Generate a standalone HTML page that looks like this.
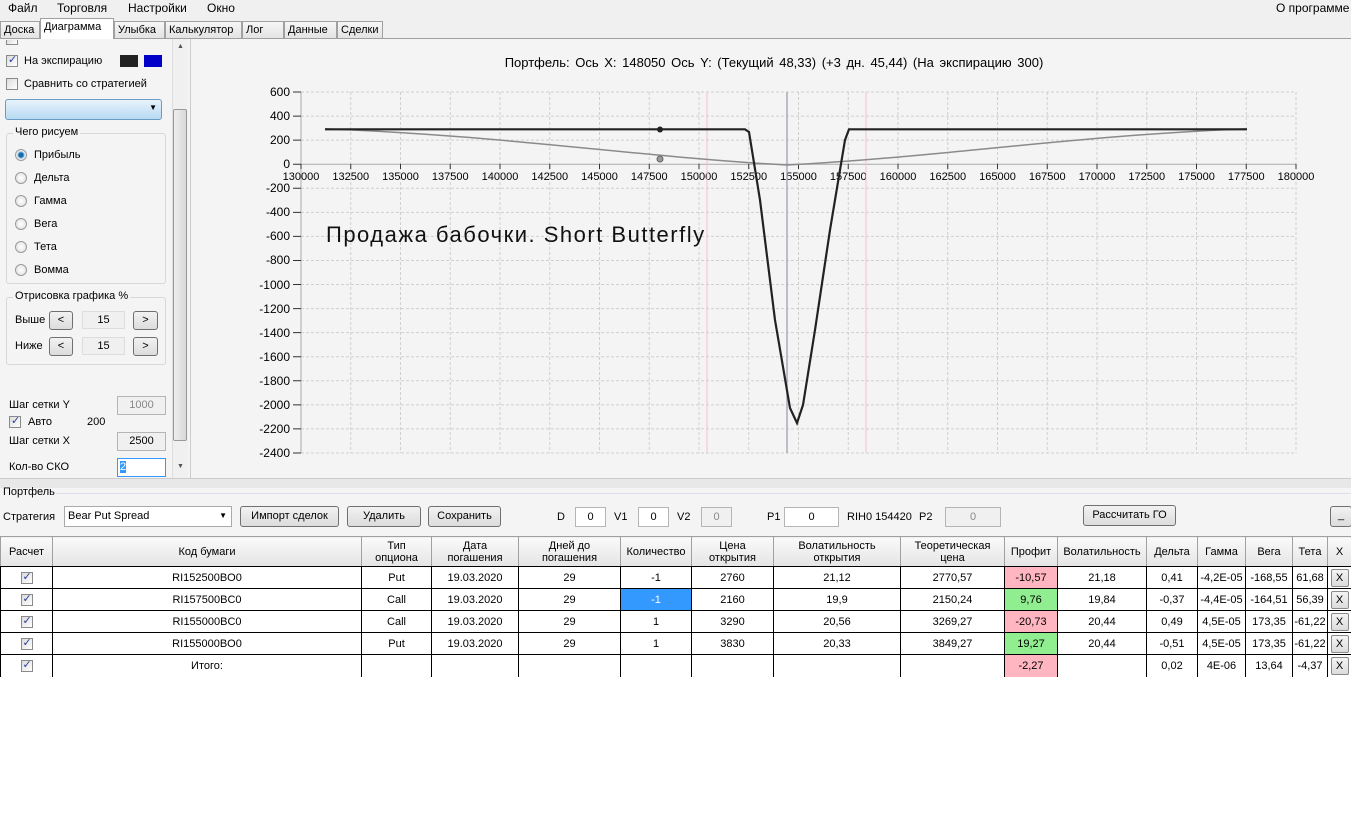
<!DOCTYPE html>
<html><head><meta charset="utf-8">
<style>
*{box-sizing:border-box;margin:0;padding:0}
body{width:1351px;height:816px;background:#fff;font-family:"Liberation Sans","DejaVu Sans",sans-serif;font-size:11px;color:#000;position:relative;overflow:hidden}
.a{position:absolute}
.menu{left:0;top:0;width:1351px;height:18px;background:#f0f0f0;font-size:12px}
.menu span{position:absolute;top:1px}
.tab{position:absolute;top:21px;height:18px;border:1px solid #a0a0a0;border-bottom:none;background:linear-gradient(#f6f6f6,#e2e2e2);font-size:11px;padding:2px 3px 0 3px;white-space:nowrap}
.main{left:0;top:38px;width:1351px;height:440px;background:#f4f4f4;border-top:1px solid #a0a0a0}
.chk{position:absolute;width:12px;height:12px;border:1px solid #8a8a8a;background:linear-gradient(135deg,#dcdcdc,#fff)}
.chk.on::after{content:"✓";position:absolute;left:1px;top:-3px;font-size:11px;color:#2a3f9a;font-weight:bold}
.rad{position:absolute;width:12px;height:12px;border-radius:50%;border:1px solid #9a9a9a;background:radial-gradient(#fff,#ddd)}
.rad.on{background:radial-gradient(#1a6aa8 30%,#8ec6ec 45%,#eee 60%)}
.grp{position:absolute;border:1px solid #d8d8d8;border-radius:3px}
.grp .t{position:absolute;top:-8px;left:6px;background:#f4f4f4;padding:0 2px}
.btn{position:absolute;border:1px solid #707070;border-radius:3px;background:linear-gradient(#f2f2f2,#dcdcdc);text-align:center;font-size:11px;line-height:17px}
.inp{position:absolute;border:1px solid #b5b5b5;background:#fff;text-align:center;line-height:17px}
.dis{background:#f0f0f0;color:#888}
table{position:absolute;left:0;top:536px;border-collapse:collapse;table-layout:fixed;width:1351px;font-size:11px}
td,th{border:1px solid #000;text-align:center;height:22px;padding:0;overflow:hidden;white-space:nowrap}
th{background:linear-gradient(#fafafa,#e4e4e4);font-weight:normal;height:30px;border-color:#a0a0a0;line-height:12px;border-bottom:1px solid #000}
.r{background:#ffb6c1}.g{background:#90ee90}
.x{display:inline-block;width:18px;height:18px;border:1px solid #8a8a8a;border-radius:2px;background:linear-gradient(#f4f4f4,#dcdcdc);line-height:16px}
td .chk{position:relative;display:inline-block;vertical-align:middle}
</style></head><body>
<div class="a menu"><span style="left:8px">Файл</span><span style="left:57px">Торговля</span><span style="left:128px">Настройки</span><span style="left:207px">Окно</span><span style="left:1276px">О программе</span></div>
<div class="a" style="left:0;top:18px;width:1351px;height:21px;background:#f0f0f0"></div>
<div class="tab" style="left:0;width:40px">Доска</div>
<div class="tab" style="left:40px;top:18px;height:21px;width:74px;background:#fff;z-index:2">Диаграмма</div>
<div class="tab" style="left:114px;width:51px">Улыбка</div>
<div class="tab" style="left:165px;width:77px">Калькулятор</div>
<div class="tab" style="left:242px;width:42px">Лог</div>
<div class="tab" style="left:284px;width:53px">Данные</div>
<div class="tab" style="left:337px;width:46px">Сделки</div>

<div class="a main">
 <div class="chk" style="left:6px;top:1px;height:5px;border-top:none"></div>
 <div class="chk on" style="left:6px;top:16px"></div><div class="a" style="left:24px;top:16px">На экспирацию</div>
 <div class="a" style="left:120px;top:16px;width:18px;height:12px;background:#222"></div>
 <div class="a" style="left:144px;top:16px;width:18px;height:12px;background:#0000c8"></div>
 <div class="chk" style="left:6px;top:39px"></div><div class="a" style="left:24px;top:39px">Сравнить со стратегией</div>
 <div class="a" style="left:5px;top:60px;width:157px;height:21px;border:1px solid #6b9bc3;border-radius:3px;background:linear-gradient(#e8f3fb,#b7d9f2)"><span style="position:absolute;right:4px;top:3px;font-size:8px">▼</span></div>
 <div class="grp" style="left:6px;top:94px;width:160px;height:151px"><span class="t">Чего рисуем</span></div>
 <div class="rad on" style="left:15px;top:110px"></div><div class="a" style="left:34px;top:110px">Прибыль</div>
 <div class="rad" style="left:15px;top:133px"></div><div class="a" style="left:34px;top:133px">Дельта</div>
 <div class="rad" style="left:15px;top:156px"></div><div class="a" style="left:34px;top:156px">Гамма</div>
 <div class="rad" style="left:15px;top:179px"></div><div class="a" style="left:34px;top:179px">Вега</div>
 <div class="rad" style="left:15px;top:202px"></div><div class="a" style="left:34px;top:202px">Тета</div>
 <div class="rad" style="left:15px;top:225px"></div><div class="a" style="left:34px;top:225px">Вомма</div>
 <div class="grp" style="left:6px;top:258px;width:160px;height:68px"><span class="t">Отрисовка графика %</span></div>
 <div class="a" style="left:15px;top:275px">Выше</div><div class="btn" style="left:49px;top:272px;width:24px;height:19px">&lt;</div><div class="inp dis" style="left:82px;top:272px;width:43px;height:18px;color:#000;border-color:#ddd">15</div><div class="btn" style="left:133px;top:272px;width:25px;height:19px">&gt;</div>
 <div class="a" style="left:15px;top:301px">Ниже</div><div class="btn" style="left:49px;top:298px;width:24px;height:19px">&lt;</div><div class="inp dis" style="left:82px;top:298px;width:43px;height:18px;color:#000;border-color:#ddd">15</div><div class="btn" style="left:133px;top:298px;width:25px;height:19px">&gt;</div>
 <div class="a" style="left:9px;top:360px">Шаг сетки Y</div><div class="inp dis" style="left:117px;top:357px;width:49px;height:19px">1000</div>
 <div class="chk on" style="left:9px;top:377px"></div><div class="a" style="left:28px;top:377px">Авто</div><div class="a" style="left:87px;top:377px">200</div>
 <div class="a" style="left:9px;top:396px">Шаг сетки X</div><div class="inp" style="left:117px;top:393px;width:49px;height:19px;background:#f0f0f0">2500</div>
 <div class="a" style="left:9px;top:422px">Кол-во СКО</div><div class="inp" style="left:117px;top:419px;width:49px;height:19px;border-color:#3399ff;text-align:left;padding-left:2px"><span style="background:#3399ff;color:#fff">2</span></div>
 <div class="a" style="left:172px;top:0;width:16px;height:440px;background:#f0f0f0;border-left:1px solid #ddd"></div>
 <div class="a" style="left:177px;top:4px;font-size:7px;color:#555">▲</div>
 <div class="a" style="left:177px;top:424px;font-size:7px;color:#555">▼</div>
 <div class="a" style="left:173px;top:70px;width:14px;height:332px;border:1px solid #999;border-radius:2px;background:linear-gradient(90deg,#eee,#d8d8d8)"></div>
 <div class="a" style="left:190px;top:0;width:1px;height:440px;background:#ccc"></div>
</div>

<svg class="a" style="left:0;top:0" width="1351" height="478" font-family="Liberation Sans, sans-serif" font-size="11">
 <text x="774" y="67" text-anchor="middle" font-size="13" word-spacing="2">Портфель:  Ось X:  148050 Ось Y:   (Текущий 48,33)  (+3 дн. 45,44)  (На экспирацию 300)</text>
 <g stroke="#cfcfcf" stroke-dasharray="3,2" fill="none">
  <path d="M350.75 92V453M400.5 92V453M450.25 92V453M500 92V453M549.75 92V453M599.5 92V453M649.25 92V453M699 92V453M748.75 92V453M798.5 92V453M848.25 92V453M898 92V453M947.75 92V453M997.5 92V453M1047.25 92V453M1097 92V453M1146.75 92V453M1196.5 92V453M1246.25 92V453M1296 92V453"/>
  <path d="M301 92H1296M301 116.07H1296M301 140.13H1296M301 188.27H1296M301 212.33H1296M301 236.4H1296M301 260.47H1296M301 284.53H1296M301 308.6H1296M301 332.67H1296M301 356.73H1296M301 380.8H1296M301 404.87H1296M301 428.93H1296M301 453H1296"/>
 </g>
 <path d="M301 92V453M301 164.2H1296" stroke="#aaa" fill="none"/>
 <g stroke="#333"><path d="M293 92H301M293 116.07H301M293 140.13H301M293 164.2H301M293 188.27H301M293 212.33H301M293 236.4H301M293 260.47H301M293 284.53H301M293 308.6H301M293 332.67H301M293 356.73H301M293 380.8H301M293 404.87H301M293 428.93H301M293 453H301"/>
 <path d="M301 164V169M350.75 164V169M400.5 164V169M450.25 164V169M500 164V169M549.75 164V169M599.5 164V169M649.25 164V169M699 164V169M748.75 164V169M798.5 164V169M848.25 164V169M898 164V169M947.75 164V169M997.5 164V169M1047.25 164V169M1097 164V169M1146.75 164V169M1196.5 164V169M1246.25 164V169M1296 164V169"/></g>
 <g text-anchor="end" font-size="12"><text x="290" y="96">600</text><text x="290" y="120">400</text><text x="290" y="144">200</text><text x="290" y="168">0</text><text x="290" y="192">-200</text><text x="290" y="216">-400</text><text x="290" y="240">-600</text><text x="290" y="264">-800</text><text x="290" y="289">-1000</text><text x="290" y="313">-1200</text><text x="290" y="337">-1400</text><text x="290" y="361">-1600</text><text x="290" y="385">-1800</text><text x="290" y="409">-2000</text><text x="290" y="433">-2200</text><text x="290" y="457">-2400</text></g>
 <g text-anchor="middle"><text x="301" y="180">130000</text><text x="350.75" y="180">132500</text><text x="400.5" y="180">135000</text><text x="450.25" y="180">137500</text><text x="500" y="180">140000</text><text x="549.75" y="180">142500</text><text x="599.5" y="180">145000</text><text x="649.25" y="180">147500</text><text x="699" y="180">150000</text><text x="748.75" y="180">152500</text><text x="798.5" y="180">155000</text><text x="848.25" y="180">157500</text><text x="898" y="180">160000</text><text x="947.75" y="180">162500</text><text x="997.5" y="180">165000</text><text x="1047.25" y="180">167500</text><text x="1097" y="180">170000</text><text x="1146.75" y="180">172500</text><text x="1196.5" y="180">175000</text><text x="1246.25" y="180">177500</text><text x="1296" y="180">180000</text></g>
 <path d="M707 92V453M866 92V453" stroke="#f2c4cc"/>
 <path d="M787 92V453" stroke="#a8abb8" stroke-width="1.5"/>
 <path d="M325 128.9C500 135 650 158 787 165C930 158 1080 135 1247 128.9" stroke="#8a8a8a" stroke-width="1.5" fill="none"/>
 <path d="M325 129.3L745 129.3L749 132L760 200L775 320L790 408L797 423L803 405L815 330L830 230L845 140L849 129.3L1247 129.3" stroke="#222" stroke-width="2.2" fill="none"/>
 <circle cx="660" cy="129.5" r="3" fill="#222"/><circle cx="660" cy="159" r="3" fill="#999" stroke="#666"/>
 <text x="326" y="242" font-size="22" letter-spacing="1.5" fill="#111">Продажа бабочки. Short Butterfly</text>
</svg>

<div class="a" style="left:0;top:478px;width:1351px;height:10px;background:#e8e8e8;border-top:1px solid #ccc"></div>
<div class="a" style="left:0;top:488px;width:1351px;height:48px;background:#f4f4f4"></div>
<div class="a" style="left:3px;top:486px">Портфель</div>
<div class="a" style="left:56px;top:493px;width:1295px;height:1px;background:#dde"></div>
<div class="a" style="left:3px;top:511px">Стратегия</div>
<div class="a" style="left:64px;top:506px;width:168px;height:21px;border:1px solid #aaa;background:#fff;padding:3px 3px"><span>Bear Put Spread</span><span style="position:absolute;right:4px;top:4px;font-size:8px">▼</span></div>
<div class="btn" style="left:240px;top:506px;width:99px;height:21px;line-height:19px">Импорт сделок</div>
<div class="btn" style="left:347px;top:506px;width:74px;height:21px;line-height:19px">Удалить</div>
<div class="btn" style="left:428px;top:506px;width:73px;height:21px;line-height:19px">Сохранить</div>
<div class="a" style="left:557px;top:511px">D</div><div class="inp" style="left:575px;top:507px;width:31px;height:20px;line-height:18px">0</div>
<div class="a" style="left:614px;top:511px">V1</div><div class="inp" style="left:638px;top:507px;width:31px;height:20px;line-height:18px">0</div>
<div class="a" style="left:677px;top:511px">V2</div><div class="inp dis" style="left:701px;top:507px;width:31px;height:20px;line-height:18px">0</div>
<div class="a" style="left:767px;top:511px">P1</div><div class="inp" style="left:784px;top:507px;width:55px;height:20px;line-height:18px">0</div>
<div class="a" style="left:847px;top:511px">RIH0 154420</div><div class="a" style="left:919px;top:511px">P2</div>
<div class="inp dis" style="left:945px;top:507px;width:56px;height:20px;line-height:18px">0</div>
<div class="btn" style="left:1083px;top:505px;width:93px;height:21px;line-height:19px">Рассчитать ГО</div>
<div class="btn" style="left:1330px;top:506px;width:22px;height:21px;line-height:17px">_</div>

<table>
<colgroup><col style="width:52px"><col style="width:309px"><col style="width:70px"><col style="width:87px"><col style="width:102px"><col style="width:71px"><col style="width:82px"><col style="width:127px"><col style="width:104px"><col style="width:53px"><col style="width:89px"><col style="width:51px"><col style="width:48px"><col style="width:47px"><col style="width:35px"><col style="width:24px"></colgroup>
<tr><th>Расчет</th><th>Код бумаги</th><th>Тип<br>опциона</th><th>Дата<br>погашения</th><th>Дней до<br>погашения</th><th>Количество</th><th>Цена<br>открытия</th><th>Волатильность<br>открытия</th><th>Теоретическая<br>цена</th><th>Профит</th><th>Волатильность</th><th>Дельта</th><th>Гамма</th><th>Вега</th><th>Тета</th><th>X</th></tr>
<tr><td><span class="chk on"></span></td><td>RI152500BO0</td><td>Put</td><td>19.03.2020</td><td>29</td><td>-1</td><td>2760</td><td>21,12</td><td>2770,57</td><td class="r">-10,57</td><td>21,18</td><td>0,41</td><td>-4,2E-05</td><td>-168,55</td><td>61,68</td><td><span class="x">X</span></td></tr>
<tr><td><span class="chk on"></span></td><td>RI157500BC0</td><td>Call</td><td>19.03.2020</td><td>29</td><td style="background:#3399ff;color:#fff">-1</td><td>2160</td><td>19,9</td><td>2150,24</td><td class="g">9,76</td><td>19,84</td><td>-0,37</td><td>-4,4E-05</td><td>-164,51</td><td>56,39</td><td><span class="x">X</span></td></tr>
<tr><td><span class="chk on"></span></td><td>RI155000BC0</td><td>Call</td><td>19.03.2020</td><td>29</td><td>1</td><td>3290</td><td>20,56</td><td>3269,27</td><td class="r">-20,73</td><td>20,44</td><td>0,49</td><td>4,5E-05</td><td>173,35</td><td>-61,22</td><td><span class="x">X</span></td></tr>
<tr><td><span class="chk on"></span></td><td>RI155000BO0</td><td>Put</td><td>19.03.2020</td><td>29</td><td>1</td><td>3830</td><td>20,33</td><td>3849,27</td><td class="g">19,27</td><td>20,44</td><td>-0,51</td><td>4,5E-05</td><td>173,35</td><td>-61,22</td><td><span class="x">X</span></td></tr>
<tr><td style="height:19px;border-bottom:none"><span class="chk on"></span></td><td style="border-bottom:none">Итого:</td><td style="border-bottom:none"></td><td style="border-bottom:none"></td><td style="border-bottom:none"></td><td style="border-bottom:none"></td><td style="border-bottom:none"></td><td style="border-bottom:none"></td><td style="border-bottom:none"></td><td class="r" style="border-bottom:none">-2,27</td><td style="border-bottom:none"></td><td style="border-bottom:none">0,02</td><td style="border-bottom:none">4E-06</td><td style="border-bottom:none">13,64</td><td style="border-bottom:none">-4,37</td><td style="border-bottom:none"><span class="x">X</span></td></tr>
</table>
</body></html>
